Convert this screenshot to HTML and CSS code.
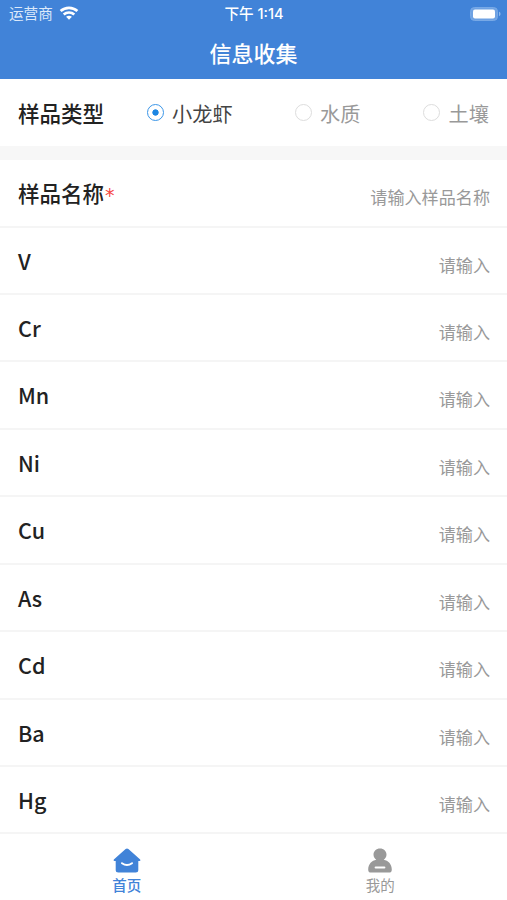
FILE: index.html
```html
<!DOCTYPE html>
<html lang="zh-CN">
<head>
<meta charset="utf-8">
<title>信息收集</title>
<link rel="stylesheet" href="styles.css">
</head>
<body>
<div class="app">
  <header class="header">
    <div class="status">
      <div class="carrier"><span>运营商</span>
        <svg class="wifi" viewBox="0 0 20 14" width="20" height="14" fill="none" stroke="#fff" stroke-width="2.7"><path d="M1.6 5.1C6.4.7 13.6.7 18.4 5.1"/><path d="M4.7 8.5c3-2.7 7.6-2.7 10.6 0"/><path d="M10 13.7 7.1 10.8c1.7-1.5 4.1-1.5 5.8 0z" fill="#fff" stroke="none"/></svg>
      </div>
      <div class="time">下午 1:14</div>
      <svg class="battery" viewBox="0 0 31 14" width="31" height="14"><rect x=".5" y=".5" width="27" height="13" rx="4" fill="#6fa2e3" stroke="#78a9e6"/><rect x="3" y="2.5" width="22" height="9" rx="2" fill="#fff"/><path d="M29 4.8c2 .6 2 3.8 0 4.4z" fill="#8db7ec"/></svg>
    </div>
    <h1 class="title">信息收集</h1>
  </header>
  <main class="form">
    <div class="types">
      <span class="label">样品类型</span>
      <div class="option selected"><i class="radio"></i><span>小龙虾</span></div>
      <div class="option"><i class="radio"></i><span>水质</span></div>
      <div class="option"><i class="radio"></i><span>土壤</span></div>
    </div>
    <div class="fields">
      <div class="row"><span class="label">样品名称<b class="required">*</b></span><span class="hint">请输入样品名称</span></div>
      <div class="row"><span class="label">V</span><span class="hint">请输入</span></div>
      <div class="row"><span class="label">Cr</span><span class="hint">请输入</span></div>
      <div class="row"><span class="label">Mn</span><span class="hint">请输入</span></div>
      <div class="row"><span class="label">Ni</span><span class="hint">请输入</span></div>
      <div class="row"><span class="label">Cu</span><span class="hint">请输入</span></div>
      <div class="row"><span class="label">As</span><span class="hint">请输入</span></div>
      <div class="row"><span class="label">Cd</span><span class="hint">请输入</span></div>
      <div class="row"><span class="label">Ba</span><span class="hint">请输入</span></div>
      <div class="row"><span class="label">Hg</span><span class="hint">请输入</span></div>
    </div>
  </main>
  <nav class="tabs">
    <div class="tab active">
      <svg viewBox="0 0 28 25" width="28" height="25"><path d="M12.6 1.1q1.4-1.2 2.8 0L26.9 11.3q1.2 1.5-.4 1.8H25.3V22q0 2.5-2.7 2.5H5.4Q2.7 24.5 2.7 22V13.1H1.500Q-.1 12.8 1.1 11.3z" fill="currentColor"/><path d="M9 15.2q5 3.6 10 0" fill="none" stroke="#fff" stroke-width="2" stroke-linecap="round"/></svg>
      <span>首页</span>
    </div>
    <div class="tab">
      <svg viewBox="0 0 28 25" width="28" height="25"><path d="M14 .4c3.8 0 6.5 2.6 6.5 6.100 0 2.500-1.100 4-2.800 5.300 4.400.8 8 4.200 8.100 9.600 0 2.200-1 3.100-3.100 3.100H5.300c-2.100 0-3.100-.9-3.100-3.100.1-5.400 3.700-8.800 8.100-9.600C8.600 10.500 7.500 9 7.500 6.500 7.500 3 10.200.4 14 .4z" fill="currentColor"/><path d="M9.600 19.500h8.800" stroke="#fff" stroke-width="2" stroke-linecap="round"/></svg>
      <span>我的</span>
    </div>
  </nav>
</div>
</body>
</html>
```
FILE: styles.css
```css
* { box-sizing: border-box; }
body {
  margin: 0;
  background: #fff;
  color: #222;
  font-family: "Noto Sans CJK SC", sans-serif;
}
.app {
  display: flex;
  flex-direction: column;
  height: 900px;
  overflow: hidden;
}
.header {
  height: 79px;
  flex: none;
  background: #4183d8;
  color: #fff;
}
.status {
  display: grid;
  grid-template-columns: 1fr auto 1fr;
  align-items: center;
  height: 28px;
  padding: 0 6px 0 9px;
}
.carrier {
  display: flex;
  align-items: center;
  gap: 6px;
  font-size: 14.6px;
  line-height: 26px;
  color: #dce9fa;
}
.carrier span { margin-top: -2px; }
.wifi { margin-top: -2px; }
.time {
  margin-right: 2px;
  font-family: Inter, "Noto Sans CJK SC", sans-serif;
  font-size: 14.6px;
  font-weight: 500;
  line-height: 28px;
}
.battery { justify-self: end; margin-top: -1px; }
.title {
  margin: 0;
  font-size: 22px;
  font-weight: 500;
  line-height: 49px;
  text-align: center;
}
.form { flex: none; }
.types {
  display: flex;
  align-items: center;
  height: 81px;
  padding: 0 18px;
  border-bottom: 14px solid #f7f7f7;
}
.label {
  font-size: 21.5px;
  font-weight: 500;
  line-height: 32px;
}
.option {
  display: flex;
  align-items: center;
  gap: 8.5px;
  color: #999;
  font-size: 20.2px;
  line-height: 32px;
}
.option:nth-child(2) { margin-left: 42.5px; }
.option:nth-child(3) { margin-left: 62px; }
.option:nth-child(4) { margin-left: 62.5px; }
.option span { margin-top: 2px; }
.option.selected { color: #444; }
.radio {
  width: 17px;
  height: 17px;
  border: 1px solid #ddd;
  border-radius: 50%;
}
.selected .radio {
  border: 1.5px solid #3b96e8;
  background: radial-gradient(circle, #1c86e3 2.8px, transparent 3.5px);
}
.row {
  display: flex;
  justify-content: space-between;
  height: 67.43px;
  padding: 17px 17px 0 18px;
  border-bottom: 2px solid #f5f5f5;
}
.row:first-child { height: 67.6px; }
.required {
  color: #f5473f;
  font-family: "DejaVu Sans", sans-serif;
  font-size: 19px;
  font-weight: 400;
  line-height: 1;
  margin-left: 1px;
}
.hint {
  padding-top: 4px;
  color: #999;
  font-size: 17.1px;
  line-height: 32px;
}
.tabs {
  display: flex;
  flex: 1;
}
.tab {
  display: flex;
  flex: 1;
  flex-direction: column;
  align-items: center;
  padding-top: 14px;
  color: #999;
  font-size: 14.5px;
  line-height: 24px;
}
.active {
  color: #4183d8;
  font-weight: 500;
}
```
